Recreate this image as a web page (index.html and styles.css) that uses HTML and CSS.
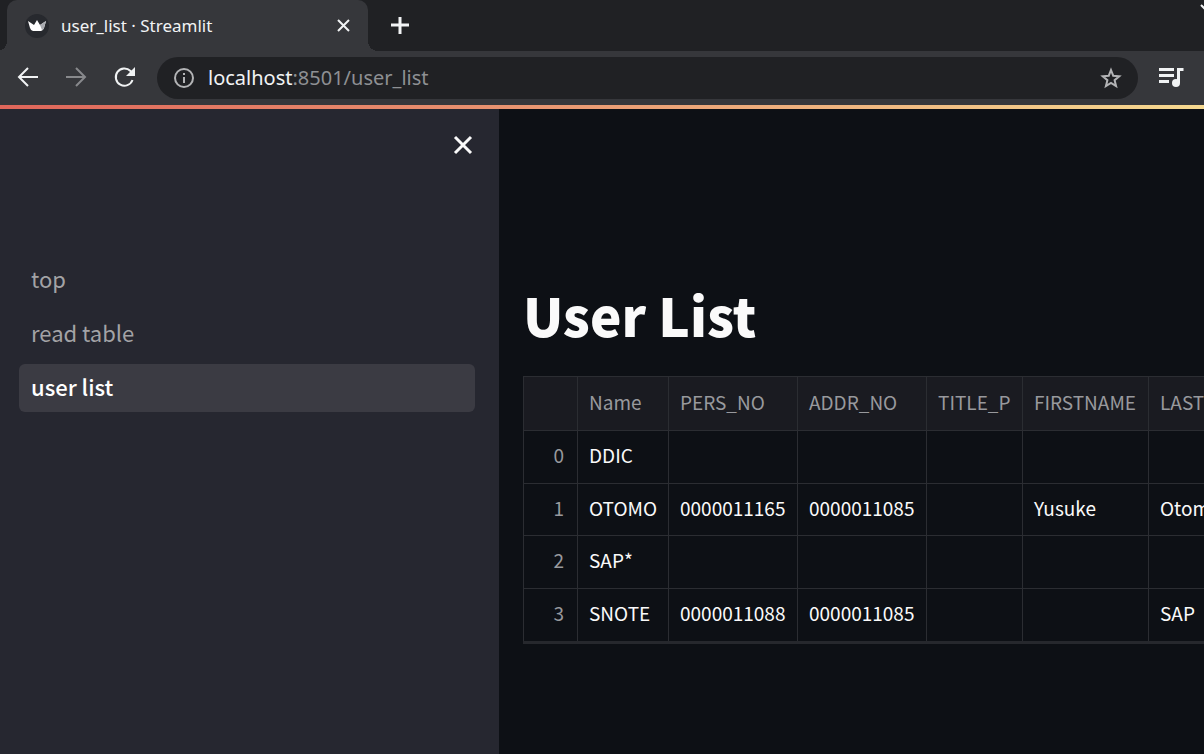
FILE: index.html
```
<!DOCTYPE html>
<html lang="en">
<head>
    <meta charset="UTF-8">
    <meta name="viewport" content="width=device-width, initial-scale=1.0">
    <title>user_list · Streamlit</title>
    <link rel="stylesheet" href="styles.css">
</head>
<body>
    <header class="browser">
        <div class="tab-strip">
            <div class="tab">
                <svg class="favicon" viewBox="0 0 24 24" width="24" height="24">
                    <circle cx="12" cy="12" r="12" fill="#27292e"/>
                    <path d="M3 7l6 4 3-5 3 5 6-4-2 7q-1 3-3 3H8q-2 0-3-3z" fill="#fff"/>
                    <path d="M15 11l6-4-2 7q-1 2-2 2z" fill="#a9abb0"/>
                </svg>
                <span class="tab-title">user_list · Streamlit</span>
                <button class="tab-close" aria-label="Close tab">
                    <svg viewBox="0 0 16 16" width="16" height="16"><path d="M2 2l11 11M13 2L2 13"/></svg>
                </button>
            </div>
            <button class="new-tab" aria-label="New tab">
                <svg viewBox="0 0 20 20" width="20" height="20"><path d="M10 1v17M1 9h18"/></svg>
            </button>
            <button class="tab-search" aria-label="Search tabs">
                <svg viewBox="0 0 14 8" width="14" height="8"><path d="M1 1l6 6 6-6"/></svg>
            </button>
        </div>

        <div class="toolbar">
            <button aria-label="Back">
                <svg viewBox="0 0 24 24" width="24" height="24"><path d="M22 11H3M12 2l-9 9 9 9"/></svg>
            </button>
            <button class="muted" aria-label="Forward">
                <svg viewBox="0 0 24 24" width="24" height="24"><path d="M2 11h19M12 2l9 9-9 9"/></svg>
            </button>
            <button aria-label="Reload">
                <svg viewBox="0 0 24 24" width="24" height="24">
                    <path d="M20.500 14a8.600 8.600 0 1 1-2-9l3 3"/>
                    <path d="M23 1v9h-9z" class="solid"/>
                </svg>
            </button>
            <div class="address-bar">
                <svg class="info" viewBox="0 0 22 22" width="22" height="22">
                    <circle cx="11" cy="11" r="9"/>
                    <path d="M11 10v6M11 6v2"/>
                </svg>
                <a class="url" href="#">localhost<span>:8501/user_list</span></a>
                <button class="star" aria-label="Bookmark this page">
                    <svg viewBox="0 0 24 24" width="24" height="24"><path d="M12 4l2.200 5.700 6.100.500-4.700 4 1.500 6-5.100-3.200-5.100 3.200 1.500-6-4.700-4 6.100-.500z"/></svg>
                </button>
            </div>
            <button class="media" aria-label="Media controls">
                <svg viewBox="0 0 26 22" width="26" height="22">
                    <path d="M1 2.500h15M1 8.500h15M1 14.500h10"/>
                    <path d="M20.500 16V2.500h5"/>
                    <circle cx="18" cy="16" r="4" class="solid"/>
                </svg>
            </button>
        </div>
    </header>

    <div class="decoration"></div>

    <div class="app">
        <aside class="sidebar">
            <button class="sidebar-close" aria-label="Close sidebar">
                <svg viewBox="0 0 20 20" width="20" height="20"><path d="M2 2l16 16M18 2L2 18"/></svg>
            </button>
            <nav>
                <a href="#">top</a>
                <a href="#">read table</a>
                <a href="#" class="active">user list</a>
            </nav>
        </aside>

        <main>
            <h1>User List</h1>
            <table>
                <colgroup>
                    <col class="index-col">
                    <col class="name-col">
                    <col class="number-col">
                    <col class="number-col">
                    <col class="title-col">
                    <col class="text-col">
                    <col class="text-col">
                </colgroup>
                <thead>
                    <tr>
                        <th></th>
                        <th>Name</th>
                        <th>PERS_NO</th>
                        <th>ADDR_NO</th>
                        <th>TITLE_P</th>
                        <th>FIRSTNAME</th>
                        <th>LASTNAME</th>
                    </tr>
                </thead>
                <tbody>
                    <tr>
                        <th>0</th>
                        <td>DDIC</td>
                        <td></td>
                        <td></td>
                        <td></td>
                        <td></td>
                        <td></td>
                    </tr>
                    <tr>
                        <th>1</th>
                        <td>OTOMO</td>
                        <td>0000011165</td>
                        <td>0000011085</td>
                        <td></td>
                        <td>Yusuke</td>
                        <td>Otomo</td>
                    </tr>
                    <tr>
                        <th>2</th>
                        <td>SAP*</td>
                        <td></td>
                        <td></td>
                        <td></td>
                        <td></td>
                        <td></td>
                    </tr>
                    <tr>
                        <th>3</th>
                        <td>SNOTE</td>
                        <td>0000011088</td>
                        <td>0000011085</td>
                        <td></td>
                        <td></td>
                        <td>SAP</td>
                    </tr>
                </tbody>
            </table>
        </main>
    </div>
</body>
</html>
```
FILE: styles.css
```
* {
    margin: 0;
    padding: 0;
    box-sizing: border-box;
}

body {
    display: flex;
    flex-direction: column;
    min-height: 100vh;
    background: #0d1015;
    color: #fafafa;
    font-family: "Noto Sans CJK JP", "Noto Sans", sans-serif;
    overflow: hidden;
}

button {
    display: flex;
    align-items: center;
    justify-content: center;
    flex-shrink: 0;
    background: none;
    border: none;
    color: inherit;
    cursor: pointer;
}

a {
    color: inherit;
    text-decoration: none;
}

svg {
    display: block;
    flex-shrink: 0;
    fill: none;
    stroke: currentColor;
    stroke-width: 2;
}

svg .solid {
    fill: currentColor;
    stroke: none;
}

/* Browser */
.browser {
    background: #36373b;
    color: #f1f3f4;
    font-family: "Noto Sans", "Open Sans", sans-serif;
}

.tab-strip {
    display: flex;
    height: 51px;
    padding-left: 7px;
    background: #202124;
    overflow: hidden;
}

.tab {
    position: relative;
    display: flex;
    align-items: center;
    width: 361px;
    padding: 0 16px 0 18px;
    background: #36373b;
    border-radius: 10px 10px 0 0;
}

.tab::before,
.tab::after {
    content: "";
    position: absolute;
    bottom: 0;
    width: 10px;
    height: 10px;
}

.tab::before {
    right: 100%;
    background: radial-gradient(circle at 0 0, transparent 10px, #36373b 10px);
}

.tab::after {
    left: 100%;
    background: radial-gradient(circle at 100% 0, transparent 10px, #36373b 10px);
}

.favicon {
    stroke: none;
}

.tab-title {
    flex: 1;
    margin-left: 12px;
    font-size: 17px;
    line-height: 24px;
}

.new-tab {
    width: 64px;
}

.new-tab svg,
.sidebar-close svg,
.media svg {
    stroke-width: 3;
}

.tab-search {
    align-items: flex-start;
    padding-top: 4px;
    margin-left: auto;
    margin-right: -10px;
}

.toolbar {
    display: flex;
    align-items: center;
    gap: 24px;
    height: 54px;
    padding: 0 20px 0 16px;
}

.muted {
    color: #88898c;
}

.address-bar {
    display: flex;
    flex: 1;
    align-items: center;
    height: 42px;
    margin-left: -3px;
    margin-right: -4px;
    padding: 0 15px 0 16px;
    background: #202124;
    border-radius: 21px;
}

.info,
.star {
    color: #b3b4b6;
}

.url {
    flex: 1;
    margin-left: 13px;
    font-size: 20px;
    line-height: 28px;
}

.url span {
    color: #8e9093;
}

/* Streamlit page */
.decoration {
    height: 4px;
    background: linear-gradient(90deg, #e0665a, #e8916f 40%, #f6d990);
}

.app {
    display: flex;
    flex: 1;
}

.sidebar {
    width: 499px;
    flex-shrink: 0;
    padding: 26px 24px 24px 19px;
    background: #262730;
}

.sidebar-close {
    margin-left: auto;
    margin-right: 2px;
}

nav {
    display: flex;
    flex-direction: column;
    gap: 6px;
    margin-top: 101px;
}

nav a {
    padding: 6px 12px 10px;
    border-radius: 6px;
    color: #a3a3a6;
    font-size: 22px;
    line-height: 32px;
}

nav a.active {
    background: #3b3b43;
    color: #fff;
    font-weight: 500;
}

main {
    flex: 1;
    min-width: 0;
    padding: 173px 0 24px 24px;
    overflow: hidden;
}

h1 {
    margin-bottom: 30px;
    font-size: 53px;
    font-weight: 900;
    line-height: 64px;
}

table {
    width: 751px;
    height: 268px;
    table-layout: fixed;
    border-collapse: collapse;
    border-bottom: 3px solid #26282d;
    font-size: 19px;
    line-height: 28px;
}

.index-col {
    width: 54px;
}

.name-col {
    width: 91px;
}

.number-col {
    width: 129px;
}

.title-col {
    width: 96px;
}

.text-col {
    width: 126px;
}

th,
td {
    padding: 0 11px 3px;
    border: 1px solid #2b2d32;
    font-weight: 400;
    text-align: left;
    white-space: nowrap;
}

th {
    color: #98999d;
}

thead th {
    height: 54px;
    background: #1a1b21;
}

tbody th {
    padding-right: 13px;
    text-align: right;
}
```
